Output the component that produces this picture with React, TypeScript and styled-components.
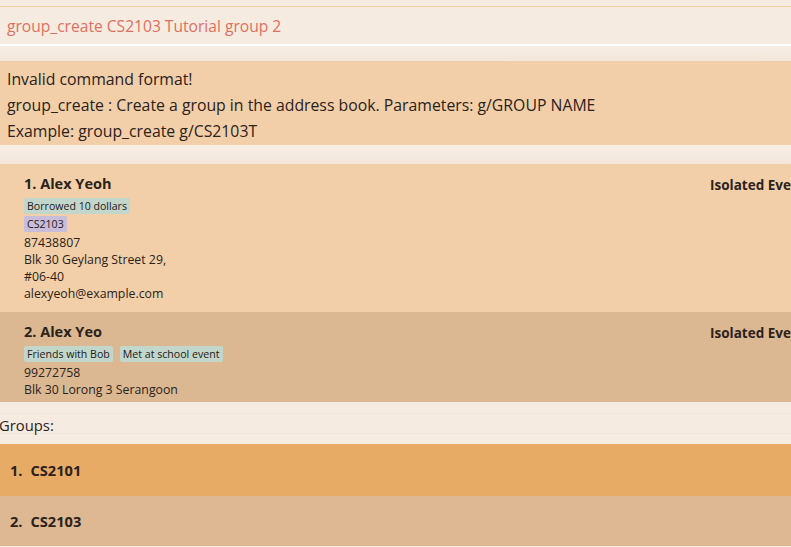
import React from "react";
import styled, { createGlobalStyle } from "styled-components";

const Global = createGlobalStyle`
  html, body { margin: 0; padding: 0; background: #f5ebe1; overflow: hidden; }
  body { font-family: "Open Sans", "Lato", sans-serif; color: #2b221b; }
`;

const Page = styled.div`
  width: 791px;
  height: 547px;
  display: flex;
  flex-direction: column;
  background: #f5ebe1;
  overflow: hidden;
`;

const CommandBox = styled.div`
  margin-top: 6px;
  height: 37px;
  border-top: 1px solid #f3cfa6;
  border-bottom: 2px solid #ffffff;
  display: flex;
  align-items: center;
  padding-left: 7px;
  font-size: 15.6px;
  color: #e0705e;
`;

const Spacer = styled.div<{ $h: number }>`
  height: ${(p) => p.$h}px;
  flex: none;
  background: linear-gradient(#f7eee5, #f3e6da);
`;

const ResultBox = styled.div`
  height: 84px;
  box-sizing: border-box;
  background: #f2cfa8;
  padding: 5px 7px;
  font-size: 15.8px;
  line-height: 26px;
  color: #2b221b;
  white-space: nowrap;
`;

const List = styled.div`
  height: 238px;
  overflow: hidden;
  flex: none;
`;

const Card = styled.div<{ $bg: string }>`
  background: ${(p) => p.$bg};
  display: flex;
  justify-content: space-between;
  padding: 10px 0 10px 24px;
  overflow: hidden;
`;

const CardMain = styled.div`
  display: flex;
  flex-direction: column;
`;

const Name = styled.div`
  font-size: 14.5px;
  font-weight: 700;
  line-height: 20px;
  margin-bottom: 4px;
`;

const TagRow = styled.div`
  display: flex;
  gap: 7px;
  margin-bottom: 2px;
`;

const Tag = styled.span<{ $bg: string }>`
  background: ${(p) => p.$bg};
  font-size: 10.6px;
  line-height: 16px;
  padding: 0 3px;
  border-radius: 2px;
  color: #1f1a16;
`;

const Field = styled.div`
  font-size: 12.3px;
  line-height: 17px;
`;

const Status = styled.div`
  font-size: 13.5px;
  font-weight: 700;
  white-space: nowrap;
  width: 81px;
  overflow: hidden;
  line-height: 20px;
  margin-top: 1px;
`;

const GroupsLabel = styled.div`
  height: 42px;
  flex: none;
  display: flex;
  align-items: center;
  padding-top: 4px;
  box-sizing: border-box;
  margin-left: -1px;
  font-size: 14.8px;
  background: linear-gradient(#f5ebe1 0 11px, #f1e4d8 11px 12px, #f5ebe1 12px 31px, #f1e4d8 31px 32px, #f5ebe1 32px);
`;

const GroupRow = styled.div<{ $bg: string; $h: number }>`
  height: ${(p) => p.$h}px;
  background: ${(p) => p.$bg};
  display: flex;
  align-items: center;
  padding-left: 10px;
  font-size: 14.6px;
  font-weight: 700;
  gap: 8px;
`;

export default function App() {
  return (
    <Page>
      <Global />
      <CommandBox>group_create CS2103 Tutorial group 2</CommandBox>
      <Spacer $h={15} />
      <ResultBox>
        <div>Invalid command format!</div>
        <div>group_create : Create a group in the address book. Parameters: g/GROUP NAME</div>
        <div>Example: group_create g/CS2103T</div>
      </ResultBox>
      <Spacer $h={19} />
      <List>
        <Card $bg="#f2cfa8">
          <CardMain>
            <Name>1. Alex Yeoh</Name>
            <TagRow>
              <Tag $bg="#c3d6cc">Borrowed 10 dollars</Tag>
            </TagRow>
            <TagRow>
              <Tag $bg="#c8bddb">CS2103</Tag>
            </TagRow>
            <Field>87438807</Field>
            <Field>Blk 30 Geylang Street 29,</Field>
            <Field>#06-40</Field>
            <Field>alexyeoh@example.com</Field>
          </CardMain>
          <Status>Isolated Events</Status>
        </Card>
        <Card $bg="#dcb892">
          <CardMain>
            <Name>2. Alex Yeo</Name>
            <TagRow>
              <Tag $bg="#c3d6cc">Friends with Bob</Tag>
              <Tag $bg="#c3d6cc">Met at school event</Tag>
            </TagRow>
            <Field>99272758</Field>
            <Field>Blk 30 Lorong 3 Serangoon</Field>
          </CardMain>
          <Status>Isolated Events</Status>
        </Card>
      </List>
      <GroupsLabel>Groups:</GroupsLabel>
      <GroupRow $bg="#e8ab66" $h={52}>
        <span>1.</span>
        <span>CS2101</span>
      </GroupRow>
      <GroupRow $bg="#ddb893" $h={50}>
        <span>2.</span>
        <span>CS2103</span>
      </GroupRow>
    </Page>
  );
}
